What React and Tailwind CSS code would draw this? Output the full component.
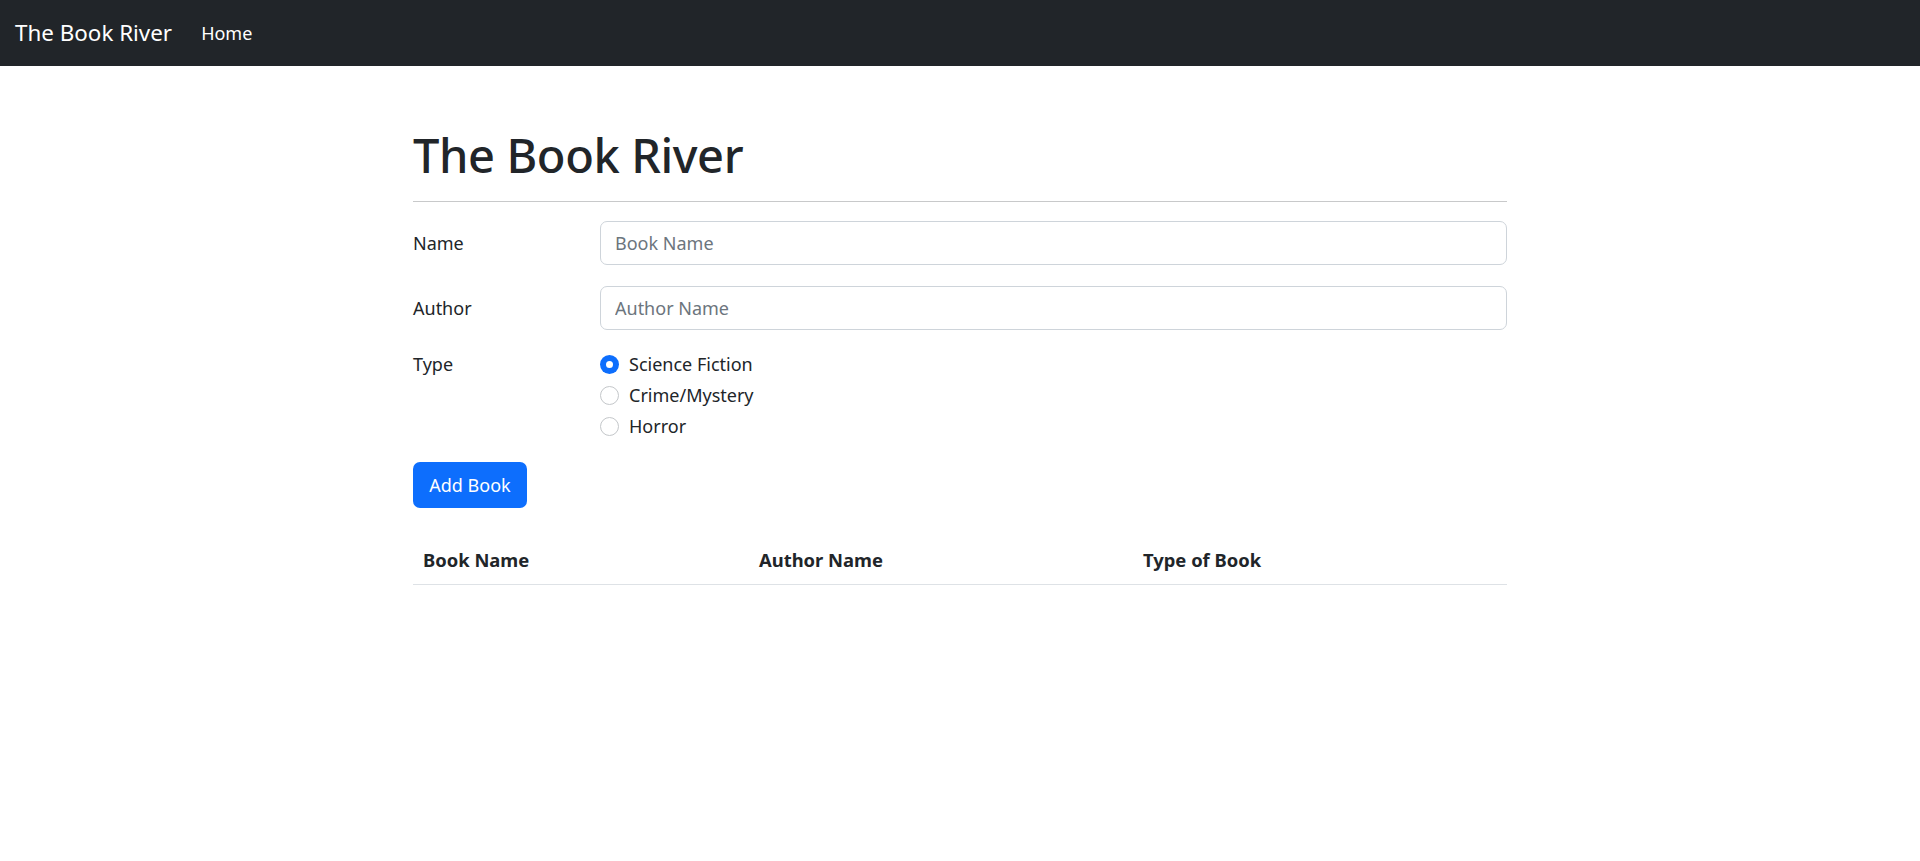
import React, { useState } from "react";

const font = { fontFamily: '"Noto Sans", "Open Sans", sans-serif' };

const types = ["Science Fiction", "Crime/Mystery", "Horror"];

const App = () => {
  const [type, setType] = useState("Science Fiction");

  return (
    <div className="min-h-[861px] bg-white text-[#212529]" style={font}>
      <nav className="h-[66px] bg-[#212529] flex items-center px-[15px]">
        <span className="text-[22.4px] text-white mr-[29px] leading-none">The Book River</span>
        <span className="text-[18px] text-white leading-none">Home</span>
      </nav>

      <main className="w-[1094px] mx-auto pt-[61px]">
        <h1 className="text-[47px] font-medium leading-[1.2] tracking-[-0.4px]">The Book River</h1>
        <div className="h-px bg-[#c8c9ca] mt-[18px]" />

        <div className="flex items-center mt-[19px]">
          <label className="w-[187px] text-[18px]">Name</label>
          <input
            className="flex-1 h-[44px] border border-[#ced4da] rounded-[7px] px-[14px] text-[18px] placeholder-[#6c757d] outline-none"
            placeholder="Book Name"
            style={font}
          />
        </div>

        <div className="flex items-center mt-[21px]">
          <label className="w-[187px] text-[18px]">Author</label>
          <input
            className="flex-1 h-[44px] border border-[#ced4da] rounded-[7px] px-[14px] text-[18px] placeholder-[#6c757d] outline-none"
            placeholder="Author Name"
            style={font}
          />
        </div>

        <div className="flex mt-[19px]">
          <label className="w-[187px] text-[18px] leading-[31px]">Type</label>
          <div className="flex flex-col">
            {types.map((t) => (
              <label key={t} className="flex items-center h-[31px] text-[18px] cursor-pointer" onClick={() => setType(t)}>
                {type === t ? (
                  <span className="w-[19px] h-[19px] rounded-full bg-[#0d6efd] flex items-center justify-center">
                    <span className="w-[7px] h-[7px] rounded-full bg-white" />
                  </span>
                ) : (
                  <span className="w-[19px] h-[19px] rounded-full border border-[#c4c7ca] bg-white" />
                )}
                <span className="ml-[10px]">{t}</span>
              </label>
            ))}
          </div>
        </div>

        <button className="mt-[20px] w-[114px] h-[46px] bg-[#0d6efd] text-white text-[18px] rounded-[7px]" style={font}>
          Add Book
        </button>

        <table className="w-full mt-[28px] border-collapse">
          <thead>
            <tr className="border-b border-[#dee2e6]">
              <th className="w-[336px] text-left font-bold text-[18.4px] px-[10px] h-[48px]">Book Name</th>
              <th className="w-[384px] text-left font-bold text-[18.4px] px-[10px] h-[48px]">Author Name</th>
              <th className="text-left font-bold text-[18.4px] px-[10px] h-[48px]">Type of Book</th>
            </tr>
          </thead>
          <tbody />
        </table>
      </main>
    </div>
  );
};

export default App;
